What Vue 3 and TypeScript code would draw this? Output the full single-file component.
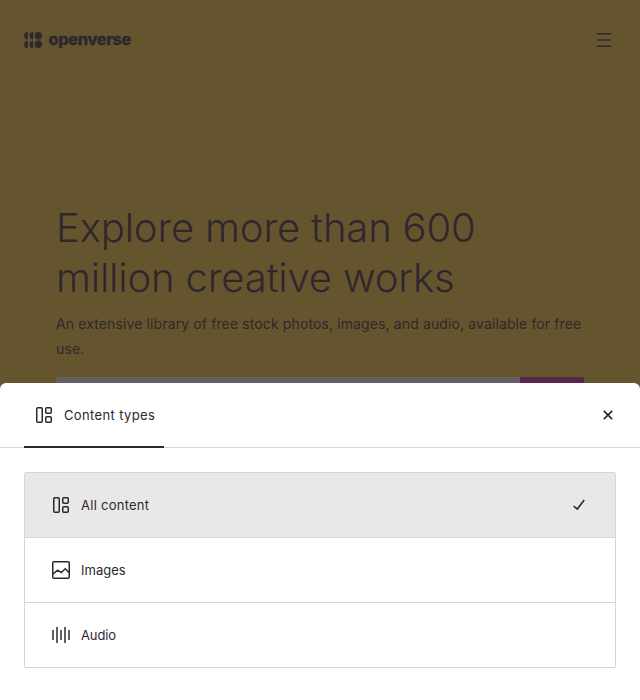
<script setup lang="ts">
import { ref } from 'vue'

type Kind = 'all' | 'image' | 'audio'

const options: { kind: Kind; label: string }[] = [
  { kind: 'all', label: 'All content' },
  { kind: 'image', label: 'Images' },
  { kind: 'audio', label: 'Audio' },
]
const selected = ref<Kind>('all')
</script>

<template>
  <div class="page">
    <header class="header">
      <svg class="logo" width="112" height="24" viewBox="0 0 112 24" role="img" aria-label="Openverse">
        <g fill="currentColor">
          <path d="M3.9 4.1v7.4a3.7 3.7 0 0 1 0-7.4zM3.9 12.7v7.4a3.7 3.7 0 0 1 0-7.4z" />
          <path d="M9.2 4.1v7.4a3.7 3.7 0 0 1 0-7.4zM9.2 12.7v7.4a3.7 3.7 0 0 1 0-7.4z" />
          <circle cx="14.3" cy="7.7" r="3.7" />
          <circle cx="14.3" cy="16.3" r="3.7" />
          <text class="wordmark" x="24.6" y="17" textLength="82.4" lengthAdjust="spacingAndGlyphs">openverse</text>
        </g>
      </svg>
      <button class="menu" aria-label="Menu">
        <svg width="14" height="14" viewBox="0 0 14 14">
          <path d="M0 .75h14M0 7h14M0 13.25h14" fill="none" stroke="currentColor" stroke-width="1.5" />
        </svg>
      </button>
    </header>
    <main class="hero">
      <h1>Explore more than 600 million creative works</h1>
      <p>An extensive library of free stock photos, images, and audio, available for free use.</p>
      <div class="search"><div class="field"></div><div class="submit"></div></div>
    </main>

    <div class="backdrop">
      <section class="sheet" role="dialog" aria-label="Content types">
        <div class="tabs">
          <div class="tab">
            <svg class="icon" width="18" height="18" viewBox="0 0 18 18" fill="none" stroke="currentColor" stroke-width="1.5">
              <rect x="1.75" y="1.75" width="5.5" height="14.5" rx="1" />
              <rect x="10.75" y="1.75" width="5.5" height="5.5" rx="1" />
              <rect x="10.75" y="10.75" width="5.5" height="5.5" rx="1" />
            </svg>
            <span>Content types</span>
          </div>
          <button class="close" aria-label="Close">
            <svg width="10" height="10" viewBox="0 0 10 10">
              <path d="M.8.8l8.4 8.4M9.2.8L.8 9.2" fill="none" stroke="currentColor" stroke-width="1.7" />
            </svg>
          </button>
        </div>
        <ul class="list">
          <li
            v-for="o in options"
            :key="o.kind"
            class="item"
            :class="[o.kind, { active: selected === o.kind }]"
            @click="selected = o.kind"
          >
            <svg class="icon" width="18" height="18" viewBox="0 0 18 18" fill="none" stroke="currentColor" stroke-width="1.5">
              <template v-if="o.kind === 'all'">
                <rect x="1.75" y="1.75" width="5.5" height="14.5" rx="1" />
                <rect x="10.75" y="1.75" width="5.5" height="5.5" rx="1" />
                <rect x="10.75" y="10.75" width="5.5" height="5.5" rx="1" />
              </template>
              <template v-else-if="o.kind === 'image'">
                <rect x=".75" y=".75" width="16.5" height="16.5" rx="1.3" />
                <path d="M1 12.8l4.8-3.6 3.4 2.4L13.3 7.8l3.9 4" />
              </template>
              <path v-else d="M1 4v10M5 1v16M9 4v10M13 1v16M17 4v10" />
            </svg>
            <span>{{ o.label }}</span>
            <svg v-if="selected === o.kind" class="check" width="12" height="12" viewBox="0 0 12 12">
              <path d="M.7 7.2l3.6 2.9L11.2 1" fill="none" stroke="currentColor" stroke-width="1.6" />
            </svg>
          </li>
        </ul>
      </section>
    </div>
  </div>
</template>

<style>
body {
  margin: 0;
}
</style>

<style scoped>
.page {
  position: relative;
  box-sizing: border-box;
  height: 700px;
  overflow: hidden;
  background: #ffe033;
  color: #30272e;
  font-family: Inter, 'Liberation Sans', sans-serif;
}
button {
  display: flex;
  padding: 0;
  border: 0;
  background: none;
  color: inherit;
}
svg {
  display: block;
  flex: none;
}
.header {
  display: flex;
  align-items: center;
  justify-content: space-between;
  height: 80px;
  padding: 0 29px 0 24px;
}
.wordmark {
  font-size: 15.5px;
  font-weight: 800;
  letter-spacing: -0.35px;
  stroke: currentColor;
  stroke-width: 0.3px;
}
.hero {
  padding: 123px 56px 0;
}
h1 {
  margin: 0;
  font-size: 40px;
  font-weight: 300;
  line-height: 50px;
  letter-spacing: -0.15px;
}
p {
  margin: 8px 0 16px;
  font-size: 14px;
  line-height: 25px;
  letter-spacing: 0.12px;
}
.search {
  display: flex;
  height: 64px;
  overflow: hidden;
  border-radius: 2px;
}
.field {
  flex: 1;
  background: #fff;
}
.submit {
  width: 64px;
  background: #c52b9b;
}
.backdrop {
  position: absolute;
  inset: 0;
  display: flex;
  align-items: flex-end;
  background: rgba(48, 39, 46, 0.75);
}
.sheet {
  box-sizing: border-box;
  width: 100%;
  height: 317px;
  border-radius: 6px 6px 0 0;
  background: #fff;
  font-size: 13px;
}
.tabs {
  display: flex;
  align-items: flex-start;
  justify-content: space-between;
  box-sizing: border-box;
  height: 65px;
  padding: 0 27px 0 24px;
  border-bottom: 1px solid #d6d4d5;
}
.tab {
  display: flex;
  align-items: center;
  gap: 11px;
  box-sizing: border-box;
  width: 140px;
  height: 65px;
  padding-left: 11px;
  border-bottom: 2px solid #30272e;
  letter-spacing: 0.36px;
}
.close {
  align-items: center;
  height: 64px;
}
.list {
  margin: 24px 24px 0;
  padding: 0;
  border: 1px solid #d6d4d5;
  border-radius: 2px;
  list-style: none;
}
.item {
  display: flex;
  align-items: center;
  gap: 11px;
  height: 64px;
  padding: 0 30px 0 27px;
}
.item + .item {
  border-top: 1px solid #d6d4d5;
}
.all {
  letter-spacing: 0.26px;
}
.audio {
  letter-spacing: -0.1px;
}
.active {
  background: #e8e8e8;
}
.check {
  margin-left: auto;
}
</style>
